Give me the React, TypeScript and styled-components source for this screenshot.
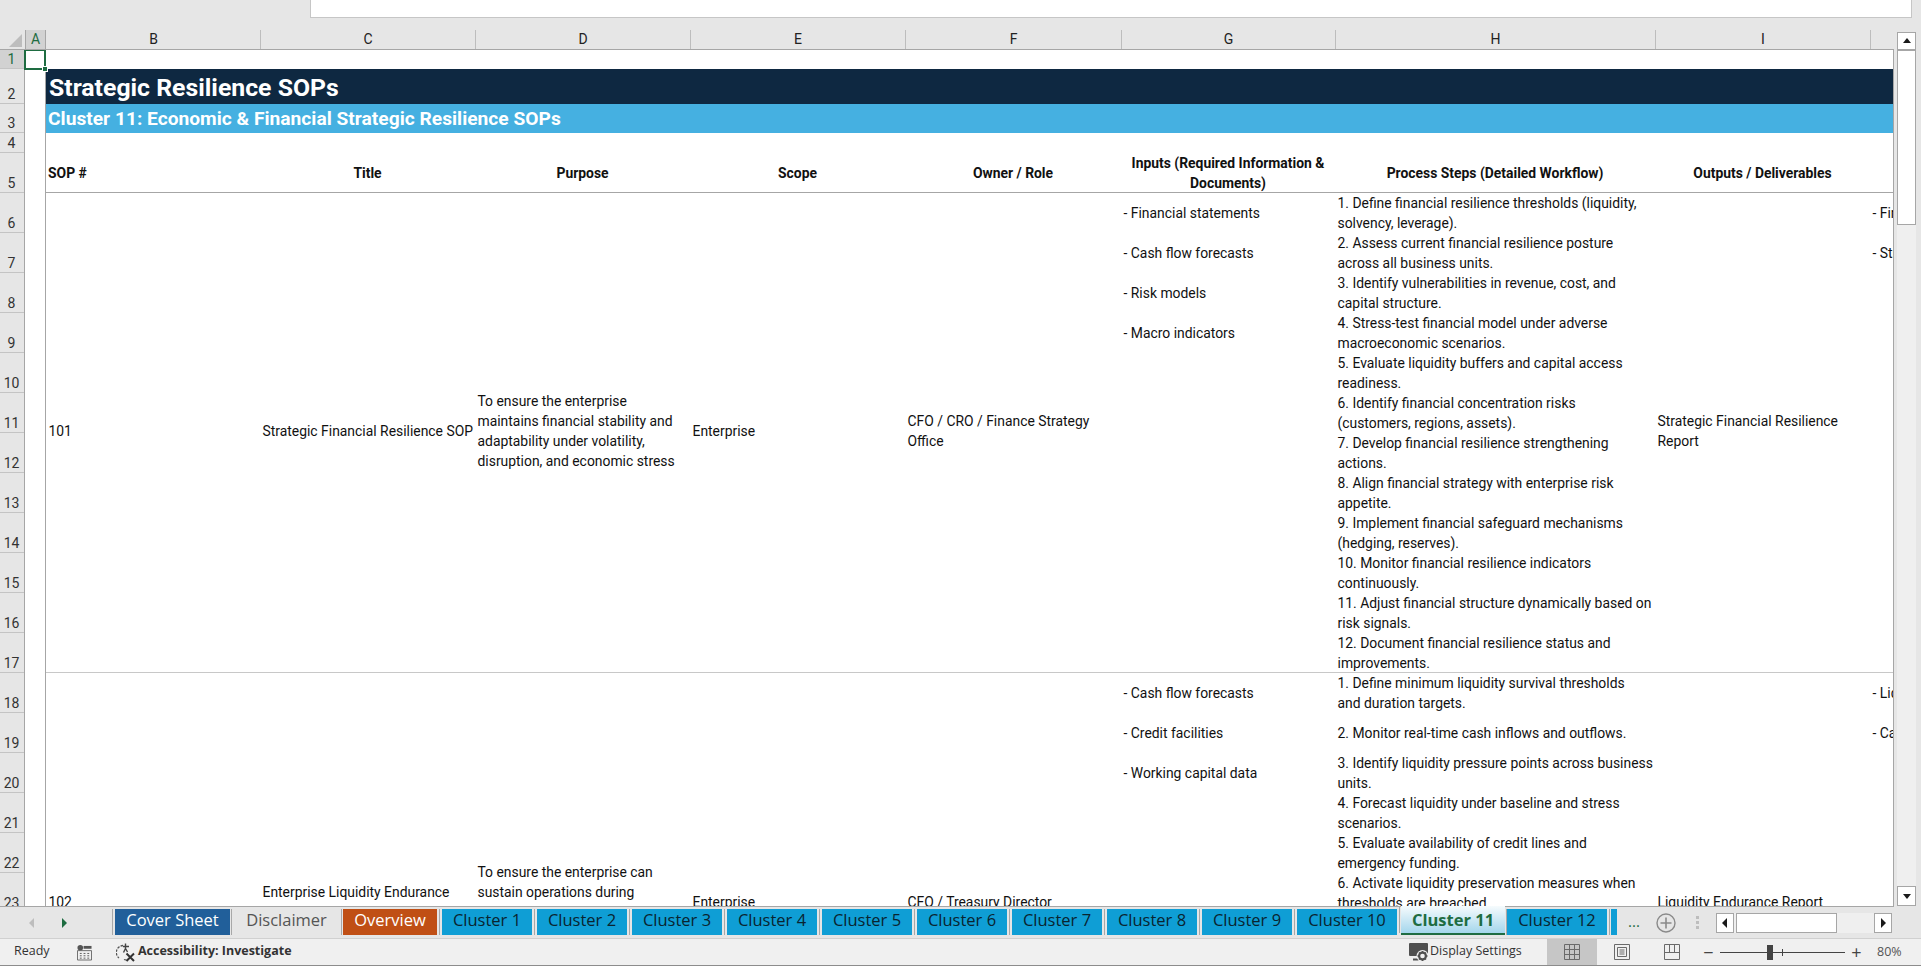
import React from "react";
import styled, { createGlobalStyle } from "styled-components";

const GREEN = "#1e6c41";
const HEADER_BG = "#e6e6e6";
const LINE = "#a6a6a6";
const UI_FONT = `"Open Sans", "Noto Sans", sans-serif`;
const CELL_FONT = `Roboto, "Liberation Sans", sans-serif`;

const COLUMN_WIDTHS = "214px 215px 215px 215px 216px 214px 320px 215px 23px";

const ROW_HEIGHTS = [19, 35, 29, 20, 40, ...Array(18).fill(40)];

const TABS = [
  { label: "Cover Sheet", width: 115, gap: 0, kind: "cover" },
  { label: "Disclaimer", width: 107, gap: 3, kind: "plain" },
  { label: "Overview", width: 94, gap: 3, kind: "overview" },
  { label: "Cluster 1", width: 90, gap: 5, kind: "cluster" },
  { label: "Cluster 2", width: 90, gap: 5, kind: "cluster" },
  { label: "Cluster 3", width: 90, gap: 5, kind: "cluster" },
  { label: "Cluster 4", width: 90, gap: 5, kind: "cluster" },
  { label: "Cluster 5", width: 90, gap: 5, kind: "cluster" },
  { label: "Cluster 6", width: 90, gap: 5, kind: "cluster" },
  { label: "Cluster 7", width: 90, gap: 5, kind: "cluster" },
  { label: "Cluster 8", width: 90, gap: 5, kind: "cluster" },
  { label: "Cluster 9", width: 90, gap: 5, kind: "cluster" },
  { label: "Cluster 10", width: 100, gap: 5, kind: "cluster" },
  { label: "Cluster 11", width: 104, gap: 4, kind: "active" },
  { label: "Cluster 12", width: 100, gap: 2, kind: "cluster" },
  { label: "", width: 6, gap: 4, kind: "cluster" },
];

const SOPS = [
  {
    height: 480,
    id: "101",
    title: "Strategic Financial Resilience SOP",
    purpose:
      "To ensure the enterprise\nmaintains financial stability and\nadaptability under volatility,\ndisruption, and economic stress",
    scope: "Enterprise",
    owner: "CFO / CRO / Finance Strategy\nOffice",
    inputs: [
      "- Financial statements",
      "- Cash flow forecasts",
      "- Risk models",
      "- Macro indicators",
    ],
    steps: [
      "1. Define financial resilience thresholds (liquidity,\nsolvency, leverage).",
      "2. Assess current financial resilience posture\nacross all business units.",
      "3. Identify vulnerabilities in revenue, cost, and\ncapital structure.",
      "4. Stress-test financial model under adverse\nmacroeconomic scenarios.",
      "5. Evaluate liquidity buffers and capital access\nreadiness.",
      "6. Identify financial concentration risks\n(customers, regions, assets).",
      "7. Develop financial resilience strengthening\nactions.",
      "8. Align financial strategy with enterprise risk\nappetite.",
      "9. Implement financial safeguard mechanisms\n(hedging, reserves).",
      "10. Monitor financial resilience indicators\ncontinuously.",
      "11. Adjust financial structure dynamically based on\nrisk signals.",
      "12. Document financial resilience status and\nimprovements.",
    ],
    output: "Strategic Financial Resilience\nReport",
    extra: ["- Financial", "- Strategy"],
  },
  {
    height: 462,
    id: "102",
    title: "Enterprise Liquidity Endurance\nSOP",
    purpose:
      "To ensure the enterprise can\nsustain operations during\nprolonged liquidity stress and\nfunding disruption",
    scope: "Enterprise",
    owner: "CFO / Treasury Director",
    inputs: ["- Cash flow forecasts", "- Credit facilities", "- Working capital data"],
    steps: [
      "1. Define minimum liquidity survival thresholds\nand duration targets.",
      "2. Monitor real-time cash inflows and outflows.",
      "3. Identify liquidity pressure points across business\nunits.",
      "4. Forecast liquidity under baseline and stress\nscenarios.",
      "5. Evaluate availability of credit lines and\nemergency funding.",
      "6. Activate liquidity preservation measures when\nthresholds are breached.",
    ],
    output: "Liquidity Endurance Report",
    extra: ["- Liquidity", "- Capital"],
  },
];

const GlobalStyle = createGlobalStyle`
  html, body {
    margin: 0;
    padding: 0;
    height: 100%;
    overflow: hidden;
    background: ${HEADER_BG};
  }
  #root {
    height: 100%;
  }
`;

function TriangleIcon({ dir, color = "#1a1a1a" }: { dir: "up" | "down" | "left" | "right"; color?: string }) {
  const points = {
    up: "1,7 5,2 9,7",
    down: "1,3 5,8 9,3",
    left: "7,0 7,10 2,5",
    right: "3,0 3,10 8,5",
  }[dir];
  return (
    <svg width="10" height="10" viewBox="0 0 10 10">
      <polygon points={points} fill={color} />
    </svg>
  );
}

function TableIcon() {
  return (
    <svg width="16" height="17" viewBox="0 0 16 17" fill="none">
      <circle cx="3.5" cy="3.5" r="3" fill="#555" />
      <path d="M7 1.5h8.5v3H7z" fill="#555" />
      <path d="M.5 6.5h15v10H.5z" stroke="#666" />
      <path d="M3 9.5h2M7 9.5h2M11 9.5h2M3 12h2M7 12h2M11 12h2M3 14.5h2M7 14.5h2M11 14.5h2" stroke="#555" />
    </svg>
  );
}

function AccessibilityIcon() {
  return (
    <svg width="20" height="20" viewBox="0 0 20 20" fill="none">
      <path d="M7 3.5A7 7 0 0 0 3 16" stroke="#555" strokeWidth="1.3" strokeDasharray="2.5 1.2" />
      <path d="M8 17.5c1 .4 2 .4 2.5.3" stroke="#555" strokeWidth="1.3" />
      <path d="M9.5 1.5v5M7 4.5h6M9.5 6.5l-2 4M9.5 6.5l2 3.5" stroke="#444" strokeWidth="1.4" />
      <path d="M10.5 11.5l7.5 7.5M18 11.5l-7.5 7.5" stroke="#333" strokeWidth="2" />
    </svg>
  );
}

function DisplayIcon() {
  return (
    <svg width="20" height="19" viewBox="0 0 20 19">
      <rect x="0" y="0" width="19" height="13" rx="1" fill="#505050" />
      <rect x="4" y="15.5" width="6" height="2" fill="#505050" />
      <circle cx="13.5" cy="13" r="6" fill="#f0f0f0" />
      <circle cx="13.5" cy="13" r="3.4" fill="none" stroke="#505050" strokeWidth="2.2" />
      <path d="M13.5 8v2M13.5 16v2M8.5 13h2M16.5 13h2M10 9.5l1.3 1.3M15.7 15.2l1.3 1.3M17 9.5l-1.3 1.3M11.3 15.2L10 16.5" stroke="#505050" strokeWidth="1.6" />
    </svg>
  );
}

function GridViewIcon() {
  return (
    <svg width="16" height="16" viewBox="0 0 16 16" fill="none" stroke="#6a6a6a">
      <path d="M.5.5h15v15H.5zM5.5.5v15M10.5.5v15M.5 5.5h15M.5 10.5h15" />
    </svg>
  );
}

function PageViewIcon() {
  return (
    <svg width="16" height="16" viewBox="0 0 16 16" fill="none" stroke="#6a6a6a">
      <path d="M.5.5h15v15H.5z" />
      <path d="M3.5 3.5h9v9h-9zM5.5 6h5M5.5 8h5M5.5 10h5" />
    </svg>
  );
}

function BreakViewIcon() {
  return (
    <svg width="16" height="16" viewBox="0 0 16 16" fill="none" stroke="#6a6a6a">
      <path d="M.5.5h15v15H.5zM.5 8.5h15M5.5.5v8M10.5.5v8" />
    </svg>
  );
}

function PlusCircleIcon() {
  return (
    <svg width="20" height="20" viewBox="0 0 20 20" fill="none" stroke="#8a8a8a">
      <circle cx="10" cy="10" r="9" strokeWidth="1.4" />
      <path d="M10 4.5v11M4.5 10h11" strokeWidth="1.6" />
    </svg>
  );
}

function SopRow({ sop }: { sop: (typeof SOPS)[number] }) {
  return (
    <SopGrid $height={sop.height}>
      <Cell>{sop.id}</Cell>
      <Cell>{sop.title}</Cell>
      <Cell>{sop.purpose}</Cell>
      <Cell>{sop.scope}</Cell>
      <Cell>{sop.owner}</Cell>
      <ItemCell>
        {sop.inputs.map((item) => (
          <Item key={item}>{item}</Item>
        ))}
      </ItemCell>
      <ItemCell>
        {sop.steps.map((step) => (
          <Item key={step}>{step}</Item>
        ))}
      </ItemCell>
      <Cell>{sop.output}</Cell>
      <ItemCell>
        {sop.extra.map((item) => (
          <Item key={item}>{item}</Item>
        ))}
      </ItemCell>
    </SopGrid>
  );
}

export default function App() {
  return (
    <Window>
      <GlobalStyle />
      <FormulaArea>
        <FormulaInput />
      </FormulaArea>

      <Main>
        <SheetColumn>
          <ColumnBar>
            <Corner>
              <svg width="16" height="16" viewBox="0 0 16 16">
                <polygon points="16,3 16,16 3,16" fill="#bdbdbd" />
              </svg>
            </Corner>
            <ColumnA>A</ColumnA>
            <ColumnLetters>
              {"BCDEFGHI".split("").map((letter) => (
                <ColumnLetter key={letter}>{letter}</ColumnLetter>
              ))}
              <ColumnLetter />
            </ColumnLetters>
          </ColumnBar>

          <SheetBody>
            <RowBar>
              {ROW_HEIGHTS.map((height, i) => (
                <RowLabel key={i} $height={height} $active={i === 0}>
                  {i + 1}
                </RowLabel>
              ))}
            </RowBar>
            <BlankColumn />
            <Content>
              <BlankRow $height={19} />
              <TitleBand>Strategic Resilience SOPs</TitleBand>
              <SubtitleBand>Cluster 11: Economic &amp; Financial Strategic Resilience SOPs</SubtitleBand>
              <BlankRow $height={20} />
              <HeaderGrid>
                <HeaderCell $left>SOP #</HeaderCell>
                <HeaderCell>Title</HeaderCell>
                <HeaderCell>Purpose</HeaderCell>
                <HeaderCell>Scope</HeaderCell>
                <HeaderCell>Owner / Role</HeaderCell>
                <HeaderCell>{"Inputs (Required Information &\nDocuments)"}</HeaderCell>
                <HeaderCell>Process Steps (Detailed Workflow)</HeaderCell>
                <HeaderCell>Outputs / Deliverables</HeaderCell>
                <HeaderCell />
              </HeaderGrid>
              {SOPS.map((sop) => (
                <SopRow key={sop.id} sop={sop} />
              ))}
            </Content>
            <ActiveCell />
          </SheetBody>
        </SheetColumn>

        <VerticalScroll>
          <ScrollButton $size={18}>
            <TriangleIcon dir="up" />
          </ScrollButton>
          <VerticalThumb />
          <VerticalTrack />
          <ScrollButton $size={20}>
            <TriangleIcon dir="down" />
          </ScrollButton>
        </VerticalScroll>
      </Main>

      <TabBar>
        <TabNav>
          <TriangleIcon dir="left" color="#bdbdbd" />
          <TriangleIcon dir="right" color={GREEN} />
        </TabNav>
        <TabStrip>
          {TABS.map((tab, i) => (
            <Tab key={i} $width={tab.width} $gap={tab.gap} $kind={tab.kind}>
              {tab.label}
            </Tab>
          ))}
        </TabStrip>
        <MoreTabs>...</MoreTabs>
        <AddSheet>
          <PlusCircleIcon />
        </AddSheet>
        <SplitDots />
        <HorizontalScroll>
          <HScrollButton>
            <TriangleIcon dir="left" />
          </HScrollButton>
          <HorizontalThumb />
          <HScrollButton>
            <TriangleIcon dir="right" />
          </HScrollButton>
        </HorizontalScroll>
      </TabBar>

      <StatusBar>
        <ReadyText>Ready</ReadyText>
        <StatusIconSlot $width={15} $gap={24}>
          <TableIcon />
        </StatusIconSlot>
        <StatusIconSlot $width={20} $gap={2}>
          <AccessibilityIcon />
        </StatusIconSlot>
        <AccessText>Accessibility: Investigate</AccessText>
        <Spacer />
        <StatusIconSlot $width={20} $gap={1}>
          <DisplayIcon />
        </StatusIconSlot>
        <StatusText>Display Settings</StatusText>
        <ViewButton $active>
          <GridViewIcon />
        </ViewButton>
        <ViewButton>
          <PageViewIcon />
        </ViewButton>
        <ViewButton>
          <BreakViewIcon />
        </ViewButton>
        <ZoomControl>
          <ZoomSign>−</ZoomSign>
          <ZoomSlider>
            <ZoomThumb />
            <ZoomTick />
          </ZoomSlider>
          <ZoomSign>+</ZoomSign>
          <ZoomValue>80%</ZoomValue>
        </ZoomControl>
      </StatusBar>
    </Window>
  );
}

const Window = styled.div`
  width: 1921px;
  height: 966px;
  display: flex;
  flex-direction: column;
  background: ${HEADER_BG};
  overflow: hidden;
`;

const FormulaArea = styled.div`
  height: 30px;
  flex: none;
  padding-left: 310px;
  box-sizing: border-box;
`;

const FormulaInput = styled.div`
  width: 1602px;
  height: 18px;
  box-sizing: border-box;
  background: #fff;
  border: 1px solid #c6c6c6;
  border-top: none;
`;

const Main = styled.div`
  height: 877px;
  flex: none;
  display: flex;
`;

const SheetColumn = styled.div`
  width: 1894px;
  flex: none;
  display: flex;
  flex-direction: column;
`;

const ColumnBar = styled.div`
  height: 20px;
  flex: none;
  display: flex;
  box-sizing: border-box;
  border-bottom: 1px solid ${LINE};
  font: 14px/19px ${CELL_FONT};
  color: #222;
`;

const Corner = styled.div`
  width: 25px;
  flex: none;
  display: flex;
  justify-content: flex-end;
  align-items: flex-end;
  padding-right: 3px;
  padding-bottom: 2px;
  box-sizing: border-box;
`;

const ColumnA = styled.div`
  width: 21px;
  flex: none;
  box-sizing: border-box;
  text-align: center;
  background: #d2d2d2;
  color: ${GREEN};
  border-left: 1px solid ${LINE};
  border-right: 1px solid ${LINE};
`;

const ColumnLetters = styled.div`
  flex: 1;
  display: grid;
  grid-template-columns: ${COLUMN_WIDTHS};
  padding-left: 1px;
`;

const ColumnLetter = styled.div`
  text-align: center;
  box-sizing: border-box;
  border-right: 1px solid #bdbdbd;
  &:last-child {
    border-right: none;
  }
`;

const SheetBody = styled.div`
  flex: 1;
  min-height: 0;
  display: flex;
  position: relative;
  overflow: hidden;
  box-sizing: border-box;
  border-right: 1px solid ${LINE};
  border-bottom: 1px solid ${LINE};
  background: #fff;
`;

const RowBar = styled.div`
  width: 25px;
  flex: none;
  background: ${HEADER_BG};
  box-sizing: border-box;
  border-right: 1px solid ${LINE};
`;

const RowLabel = styled.div<{ $height: number; $active?: boolean }>`
  height: ${({ $height }) => $height}px;
  box-sizing: border-box;
  display: flex;
  justify-content: center;
  align-items: flex-end;
  padding-right: 1px;
  border-bottom: 1px solid #c4c4c4;
  background: ${({ $active }) => ($active ? "#d2d2d2" : "transparent")};
  color: ${({ $active }) => ($active ? GREEN : "#333")};
  font: 14px/18px ${CELL_FONT};
`;

const BlankColumn = styled.div`
  width: 21px;
  flex: none;
  box-sizing: border-box;
  border-right: 1px solid ${LINE};
`;

const Content = styled.div`
  flex: 1;
  min-width: 0;
  display: flex;
  flex-direction: column;
  font: 13.9px/20px ${CELL_FONT};
  color: #111;
`;

const BlankRow = styled.div<{ $height: number }>`
  height: ${({ $height }) => $height}px;
  flex: none;
`;

const TitleBand = styled.div`
  height: 35px;
  flex: none;
  padding-left: 3px;
  background: #0e2841;
  color: #fff;
  font: 700 24.8px/38px ${CELL_FONT};
`;

const SubtitleBand = styled.div`
  height: 29px;
  flex: none;
  padding-left: 2px;
  background: #45b0e1;
  color: #fff;
  font: 700 19.2px/29px ${CELL_FONT};
`;

const HeaderGrid = styled.div`
  height: 40px;
  flex: none;
  display: grid;
  grid-template-columns: ${COLUMN_WIDTHS};
  box-sizing: border-box;
  border-bottom: 1px solid ${LINE};
`;

const HeaderCell = styled.div<{ $left?: boolean }>`
  display: flex;
  align-items: center;
  justify-content: ${({ $left }) => ($left ? "flex-start" : "center")};
  padding: 0 2px;
  text-align: center;
  white-space: pre;
  font-weight: 700;
  overflow: hidden;
`;

const SopGrid = styled.div<{ $height: number }>`
  height: ${({ $height }) => $height}px;
  flex: none;
  display: grid;
  grid-template-columns: ${COLUMN_WIDTHS};
  box-sizing: border-box;
  border-bottom: 1px solid #c8c8c8;
`;

const Cell = styled.div`
  display: flex;
  align-items: center;
  padding-left: 2.5px;
  padding-bottom: 3px;
  white-space: pre;
  overflow: hidden;
`;

const ItemCell = styled.div`
  display: flex;
  flex-direction: column;
  padding-left: 2.5px;
  overflow: hidden;
`;

const Item = styled.div`
  height: 40px;
  flex: none;
  display: flex;
  align-items: center;
  padding-bottom: 1px;
  box-sizing: border-box;
  white-space: pre;
`;

const ActiveCell = styled.div`
  position: absolute;
  left: 24px;
  top: -1px;
  width: 22px;
  height: 21px;
  box-sizing: border-box;
  border: 2px solid ${GREEN};

  &::after {
    content: "";
    position: absolute;
    right: -4px;
    bottom: -4px;
    width: 6px;
    height: 6px;
    background: ${GREEN};
    border: 1px solid #fff;
    box-sizing: border-box;
  }
`;

const VerticalScroll = styled.div`
  flex: 1;
  display: flex;
  flex-direction: column;
  padding: 2px 5px 1px 3px;
`;

const ScrollButton = styled.div<{ $size: number }>`
  height: ${({ $size }) => $size}px;
  flex: none;
  display: flex;
  align-items: center;
  justify-content: center;
  background: #fff;
  box-sizing: border-box;
  border: 1px solid ${LINE};
`;

const VerticalThumb = styled.div`
  height: 175px;
  flex: none;
  background: #fff;
  box-sizing: border-box;
  border: 1px solid ${LINE};
`;

const VerticalTrack = styled.div`
  flex: 1;
  background: #efefef;
`;

const TabBar = styled.div`
  height: 32px;
  flex: none;
  display: flex;
  align-items: flex-start;
  box-sizing: border-box;
  border-bottom: 1px solid #d0d0d0;
`;

const TabNav = styled.div`
  width: 115px;
  flex: none;
  height: 31px;
  box-sizing: border-box;
  display: flex;
  align-items: center;
  gap: 22px;
  padding-left: 27px;
`;

const TabStrip = styled.div`
  display: flex;
  padding-top: 2px;
`;

const tabColors: Record<string, string> = {
  cover: "background: #215f9a; color: #fff;",
  plain: "background: #e6e6e6; color: #555;",
  overview: "background: #c04f15; color: #fff;",
  cluster: "background: #0f9ed5; color: #0a2430;",
  active: `background: linear-gradient(#f6fbfd, #a4d6ec); color: ${GREEN}; font-weight: 700; border-bottom: 2px solid ${GREEN}; margin-top: -3px; height: 29px; line-height: 27px;`,
};

const Tab = styled.div<{ $width: number; $gap: number; $kind: string }>`
  width: ${({ $width }) => $width}px;
  height: 26px;
  margin-left: ${({ $gap }) => $gap}px;
  flex: none;
  box-sizing: border-box;
  position: relative;
  text-align: center;
  font: 16.5px/22px ${UI_FONT};
  ${({ $kind }) => tabColors[$kind]}

  &::before {
    content: "";
    position: absolute;
    left: -${({ $gap }) => Math.ceil($gap / 2)}px;
    top: 0;
    bottom: 0;
    width: 1px;
    background: #a8a8a8;
  }

  &:first-child::before {
    left: -3px;
  }
`;

const MoreTabs = styled.div`
  margin-left: 11px;
  color: ${GREEN};
  font: 15px/28px ${UI_FONT};
  width: 28px;
  flex: none;
`;

const AddSheet = styled.div`
  margin-top: 6px;
  height: 20px;
  flex: none;
`;

const SplitDots = styled.div`
  width: 3px;
  height: 3px;
  margin: 9px 0 0 20px;
  flex: none;
  background: #bdbdbd;
  box-shadow: 0 5px 0 #bdbdbd, 0 10px 0 #bdbdbd;
`;

const HorizontalScroll = styled.div`
  width: 176px;
  height: 20px;
  margin: 6px 0 0 17px;
  flex: none;
  display: flex;
  background: #efefef;
`;

const HScrollButton = styled.div`
  width: 18px;
  flex: none;
  display: flex;
  align-items: center;
  justify-content: center;
  background: #fff;
  box-sizing: border-box;
  border: 1px solid ${LINE};
`;

const HorizontalThumb = styled.div`
  width: 101px;
  margin: 0 37px 0 2px;
  flex: none;
  background: #fff;
  box-sizing: border-box;
  border: 1px solid ${LINE};
`;

const StatusBar = styled.div`
  flex: 1;
  display: flex;
  align-items: stretch;
  background: #f0f0f0;
  box-sizing: border-box;
  border-bottom: 1px solid #8c8c8c;
  font: 12.5px/24px ${UI_FONT};
  color: #333;
`;

const ReadyText = styled.div`
  margin-left: 14px;
  width: 63px;
`;

const StatusIconSlot = styled.div<{ $width: number; $gap: number }>`
  width: ${({ $width }) => $width}px;
  margin-right: ${({ $gap }) => $gap}px;
  flex: none;
  display: flex;
  align-items: center;
`;

const AccessText = styled.div`
  font-weight: 700;
  color: #333;
`;

const Spacer = styled.div`
  flex: 1;
`;

const StatusText = styled.div`
  width: 117px;
  flex: none;
`;

const ViewButton = styled.div<{ $active?: boolean }>`
  width: 50px;
  flex: none;
  display: flex;
  align-items: center;
  justify-content: center;
  background: ${({ $active }) => ($active ? "#c6c6c6" : "transparent")};
`;

const ZoomControl = styled.div`
  width: 224px;
  flex: none;
  display: flex;
  align-items: center;
  padding-left: 6px;
  box-sizing: border-box;
`;

const ZoomSign = styled.div`
  width: 11px;
  font: 18px/20px ${UI_FONT};
  text-align: center;
  color: #444;
`;

const ZoomSlider = styled.div`
  width: 125px;
  height: 1px;
  margin: 0 6px;
  background: #444;
  position: relative;
`;

const ZoomThumb = styled.div`
  position: absolute;
  left: 47px;
  top: -7px;
  width: 6px;
  height: 15px;
  background: #444;
`;

const ZoomTick = styled.div`
  position: absolute;
  left: 62px;
  top: -3px;
  width: 1px;
  height: 7px;
  background: #444;
`;

const ZoomValue = styled.div`
  margin-left: 15px;
  color: #555;
`;
